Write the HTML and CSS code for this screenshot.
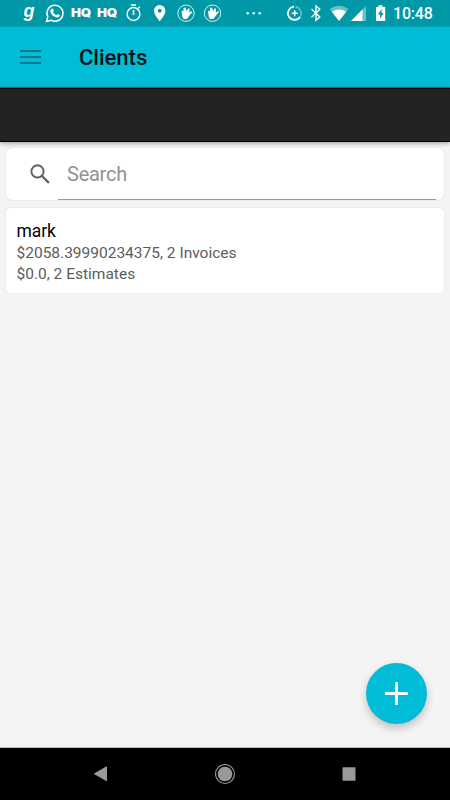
FILE: index.html
```
<!DOCTYPE html>
<html lang="en">
<head>
<meta charset="utf-8">
<title>Clients</title>
<link rel="stylesheet" href="styles.css">
</head>
<body>
<div class="status">
  <span class="slot w20 logo-g">g</span>
  <svg class="slot" width="30" height="26" viewBox="0 0 30 26" fill="none" stroke="#fff"><path d="M6.500 21.400l1.300-4.600A8 8 0 1 1 11 20.200z" stroke-width="1.500"/><path d="M11.500 9q1-1 1.700 0l.7 1.700-.9 1.300q1.200 2.200 3.500 3.200l1.200-1.300 2.100 1q0 2.400-2.800 2.500-6-1-6.800-6.400 0-1.200 1.300-2z" fill="#fff" stroke="none"/></svg>
  <span class="slot w22 logo-hq">HQ</span>
  <span class="slot w30 logo-hq">HQ</span>
  <svg class="slot" width="24" height="26" viewBox="0 0 24 26" fill="none" stroke="#fff"><circle cx="11.500" cy="14" r="6.400" stroke-width="1.500"/><path d="M9 5h5M11.500 10v5M16.300 8.400l1.500-1.400" stroke-width="1.600"/></svg>
  <svg class="slot" width="27" height="26" viewBox="0 0 27 26" fill="#fff" fill-rule="evenodd"><path d="M13.700 5a5.700 5.700 0 0 0-5.700 5.700C8 15 13.700 21.200 13.700 21.200s5.700-6.200 5.700-10.500A5.700 5.700 0 0 0 13.700 5zm0 3.700a2 2 0 1 1 0 4 2 2 0 0 1 0-4z"/></svg>
  <svg class="slot" width="26" height="26" viewBox="0 0 26 26"><circle cx="13" cy="13.200" r="8.200" fill="none" stroke="#fff" stroke-opacity=".85"/><path d="M8.500 10.800l1.900.5.200-3.600 1.800-.1 1.300 3.500 1.500-2.800 1.400.4-.2 3.700 2.500-1.300.5.900-3.900 4.700-1.600 2.300h-3.500l-1.200-2.600z" fill="#fff"/></svg>
  <svg class="slot" width="27" height="26" viewBox="0 0 27 26"><circle cx="13.500" cy="13.200" r="8.200" fill="none" stroke="#fff" stroke-opacity=".85"/><path d="M9 10.800l1.900.5.200-3.600 1.800-.1 1.300 3.500 1.500-2.800 1.400.4-.2 3.700 2.500-1.300.5.900-3.900 4.700-1.600 2.300h-3.500l-1.200-2.600z" fill="#fff"/></svg>
  <svg class="slot" width="56" height="26" viewBox="0 0 56 26" fill="#fff"><circle cx="21.700" cy="13.300" r="1.200"/><circle cx="27.700" cy="13.300" r="1.200"/><circle cx="33.700" cy="13.300" r="1.200"/></svg>
  <svg class="slot" width="26" height="26" viewBox="0 0 26 26" fill="none" stroke="#fff"><path d="M12 6.700a6.600 6.600 0 1 0 6.200 10" stroke-width="1.700"/><path d="M13.500 6.700a6.600 6.600 0 0 1 5.200 9" stroke-width="1.700" opacity=".4"/><path d="M12.700 10.300v6M9.700 13.300h6" stroke-width="1.500"/></svg>
  <svg class="slot" width="17" height="26" viewBox="0 0 17 26" fill="none" stroke="#fff" stroke-width="1.400"><path d="M3.500 9l8.300 8-3.800 3.300V6l3.800 3.300-8.300 8"/></svg>
  <svg class="slot" width="26" height="26" viewBox="0 0 26 26" fill="#fff"><path d="M4.600 9q9.400-6.600 18.800 0L14 21z" opacity=".4"/><path d="M6.800 11.700q7.200-4.500 14.400 0L14 21z"/></svg>
  <svg class="slot" width="16" height="26" viewBox="0 0 16 26" fill="#fff"><path d="M0 21L15 6v15z" opacity=".4"/><path d="M0 21L11.500 9.500V21z"/></svg>
  <svg class="slot" width="27" height="26" viewBox="0 0 27 26"><path d="M9 7h2.500V5.300h4V7h2.700v14H9z" fill="#fff"/><path d="M14.500 9l-3.600 5.500h2.200v4.300l3.500-5.700h-2.100z" fill="#0097a7"/></svg>
  <span class="time">10:48</span>
</div>
<header class="appbar">
  <svg class="menu" width="21" height="16" viewBox="0 0 21 16" stroke="#076673" stroke-width="1.700"><path d="M0 2h21M0 8h21M0 14h21"/></svg>
  <h1 class="title">Clients</h1>
</header>
<div class="band"></div>
<main class="content">
  <div class="card search">
    <svg class="lens" width="20" height="20" viewBox="0 0 20 20" fill="none" stroke="#606060" stroke-width="1.900"><circle cx="7.500" cy="7.400" r="6.100"/><path d="M12 12l6.900 6.900" stroke-width="2.200"/></svg>
    <div class="field">Search</div>
  </div>
  <div class="card client">
    <div class="name">mark</div>
    <div class="detail">$2058.39990234375, 2 Invoices</div>
    <div class="detail">$0.0, 2 Estimates</div>
  </div>
  <div class="fab"><svg width="23" height="23" viewBox="0 0 23 23" stroke="#fff" stroke-width="3"><path d="M11.500 0v23M0 11.500h23"/></svg></div>
</main>
<nav class="nav">
  <svg width="14" height="16" viewBox="0 0 14 16" fill="#999"><path d="M13 .6v14.100q-.2.500-.8.200L.5 8.300q-.7-.5 0-1L12.200.5q.6-.3.800.1z"/></svg>
  <svg width="21" height="21" viewBox="0 0 21 21"><circle cx="10" cy="10" r="9.500" fill="none" stroke="#999" stroke-width="1.100"/><circle cx="10" cy="10" r="7.300" fill="#999"/></svg>
  <svg width="14" height="14" viewBox="0 0 14 14"><rect x=".5" y=".2" width="13" height="13.600" rx=".7" fill="#999"/></svg>
</nav>
</body>
</html>
```
FILE: styles.css
```
* { box-sizing: border-box; }
body {
  margin: 0;
  width: 450px;
  height: 800px;
  display: flex;
  flex-direction: column;
  overflow: hidden;
  background: #f4f4f4;
  font-family: Roboto, sans-serif;
}
svg { display: block; flex: none; }
.status {
  height: 26px;
  flex: none;
  display: flex;
  align-items: center;
  padding-left: 20px;
  background: #0097a7;
  color: #fff;
}
.slot { flex: none; text-align: center; }
.w20 { width: 20px; }
.w22 { width: 22px; }
.w30 { width: 30px; }
.logo-g { font: italic 700 18px/24px "Liberation Sans", sans-serif; margin-top: -4px; padding-right: 2px; }
.logo-hq { font: 900 11.500px/16px Inter, sans-serif; letter-spacing: -.2px; transform: scaleX(1.15); }
.time { font-size: 16px; font-weight: 500; line-height: 20px; margin: 2px 0 0 -1px; letter-spacing: -.2px; }
.appbar {
  height: 62px;
  flex: none;
  display: flex;
  align-items: center;
  padding-left: 20px;
  background: #00bcd7;
  border-top: 1px solid #00a3b5;
  border-bottom: 1px solid #087d8c;
}
.menu { margin-top: -1px; }
.title { margin: 2px 0 0 38px; font-size: 22px; line-height: 28px; font-weight: 500; color: #001316; }
.band {
  height: 54px;
  flex: none;
  background: #232323;
  border-top: 1px solid #000;
  border-bottom: 1px solid #000;
  box-shadow: 0 1px 5px rgba(0, 0, 0, .4);
}
.content { position: relative; flex: 1; padding: 6px 6px 0; border-bottom: 1px solid #bbb; }
.card { background: #fff; box-shadow: 0 0 1px rgba(0, 0, 0, .25); }
.search {
  height: 52px;
  display: flex;
  padding: 0 8px 0 24px;
  border-radius: 6px;
}
.lens { margin: 16px 8px 0 0; }
.field {
  flex: 1;
  padding: 0 9px;
  border-bottom: 1px solid #999;
  font-size: 20px;
  line-height: 52px;
  letter-spacing: -.25px;
  color: #929292;
}
.client { height: 85px; margin-top: 8px; padding: 12px 10.500px; border-radius: 4px; }
.name { font-size: 17.500px; line-height: 22px; letter-spacing: -.1px; color: #000; }
.detail { font-size: 15.500px; line-height: 20.500px; color: #5c5c5c; }
.name + .detail { margin-top: 1px; }
.fab {
  position: absolute;
  right: 23.500px;
  bottom: 23px;
  width: 61px;
  height: 61px;
  border-radius: 50%;
  display: flex;
  align-items: center;
  justify-content: center;
  background: #00bcd7;
  box-shadow: 0 4px 8px rgba(0, 0, 0, .22);
}
.nav {
  height: 52px;
  flex: none;
  display: flex;
  align-items: center;
  justify-content: space-between;
  padding: 0 94px;
  background: #000;
}
```
